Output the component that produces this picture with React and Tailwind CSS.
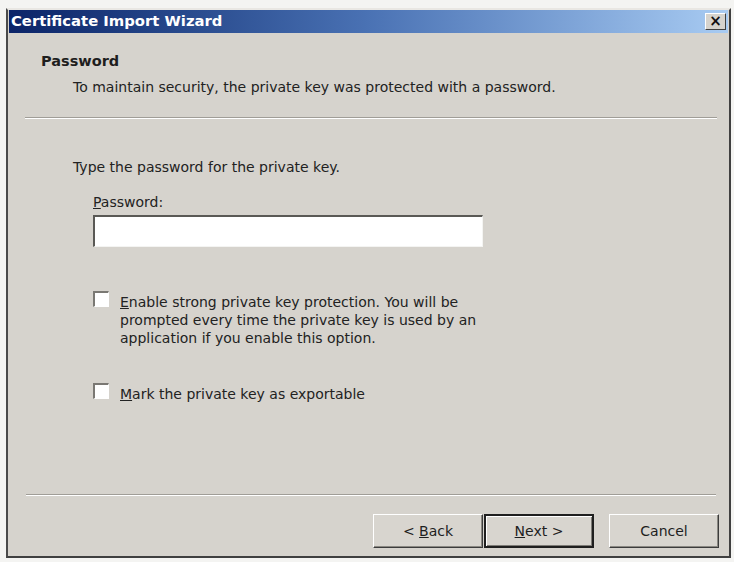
import React from 'react';

const font = { fontFamily: '"DejaVu Sans", Verdana, sans-serif' };

const Checkbox = () => (
  <span className="mt-[-2px] inline-block h-[16px] w-[16px] shrink-0 border-t-2 border-l-2 border-t-[#7a7873] border-l-[#7a7873] border-r border-b border-r-white border-b-white bg-white" />
);

const Button = ({ children, primary }) => (
  <button
    className={
      'h-[34px] w-[110px] bg-[#d8d5cf] text-[14px] text-[#1e1e1e] ' +
      (primary
        ? 'border-2 border-[#1f1f1f] shadow-[inset_1px_1px_0_#ffffff,inset_-1px_-1px_0_#7d7b76]'
        : 'border border-t-white border-l-white border-r-[#3c3c3c] border-b-[#3c3c3c] shadow-[inset_-1px_-1px_0_#8a8882]')
    }
  >
    {children}
  </button>
);

const App = () => {
  return (
    <div className="h-[562px] w-[734px] bg-[#f4f4f2] pl-[6px] pt-[8px]" style={font}>
      <div className="flex h-[550px] w-[725px] flex-col border-2 border-t-[#e9e7e3] border-l-[#4a4a4a] border-r-[#404040] border-b-[#404040] bg-[#d6d3cd]">
        {/* title bar */}
        <div className="mx-[1px] flex h-[23px] items-center justify-between bg-gradient-to-r from-[#0c2468] via-[#4a72b4] to-[#a8cbf2] pl-[2px] pr-[2px]">
          <span className="text-[14.8px] font-bold text-white">Certificate Import Wizard</span>
          <span className="flex h-[17px] w-[21px] items-center justify-center border border-t-white border-l-white border-r-[#404040] border-b-[#404040] bg-[#d6d3cd] text-[15px] font-bold leading-none text-[#111]">
            ×
          </span>
        </div>

        {/* header */}
        <div className="pl-[33px] pt-[19px] text-[14.5px] font-bold leading-[18px] text-[#1e1e1e]">Password</div>
        <div className="mt-[8px] pl-[65px] text-[14px] leading-[18px] text-[#222]">
          To maintain security, the private key was protected with a password.
        </div>
        <div className="ml-[17px] mr-[12px] mt-[21px] h-[2px] border-t border-b border-t-[#a09d97] border-b-white" />

        {/* body */}
        <div className="mt-[39px] pl-[65px] text-[14px] leading-[18px] text-[#222]">
          Type the password for the private key.
        </div>
        <div className="mt-[17px] pl-[85px] text-[14px] leading-[18px] text-[#222]">
          <span className="underline">P</span>assword:
        </div>
        <div className="ml-[85px] mt-[4px] h-[32px] w-[390px] border-t-2 border-l-2 border-t-[#5a5955] border-l-[#5a5955] border-r border-b border-r-[#f4f4f2] border-b-[#f4f4f2] bg-white" />

        <div className="ml-[85px] mt-[46px] flex gap-[11px] text-[14px] leading-[18px] text-[#222]">
          <Checkbox />
          <span>
            <span className="underline">E</span>nable strong private key protection. You will be
            <br />
            prompted every time the private key is used by an
            <br />
            application if you enable this option.
          </span>
        </div>

        <div className="ml-[85px] mt-[38px] flex gap-[11px] text-[14px] leading-[18px] text-[#222]">
          <Checkbox />
          <span>
            <span className="underline">M</span>ark the private key as exportable
          </span>
        </div>

        <div className="flex-1" />

        {/* footer */}
        <div className="ml-[18px] mr-[13px] h-[2px] border-t border-b border-t-[#a09d97] border-b-white" />
        <div className="mr-[10px] mt-[18px] mb-[8px] flex justify-end">
          <Button>
            &lt; <span className="underline">B</span>ack
          </Button>
          <div className="ml-[1px]">
            <Button primary>
              <span className="underline">N</span>ext &gt;
            </Button>
          </div>
          <div className="ml-[15px]">
            <Button>Cancel</Button>
          </div>
        </div>
      </div>
    </div>
  );
};

export default App;
